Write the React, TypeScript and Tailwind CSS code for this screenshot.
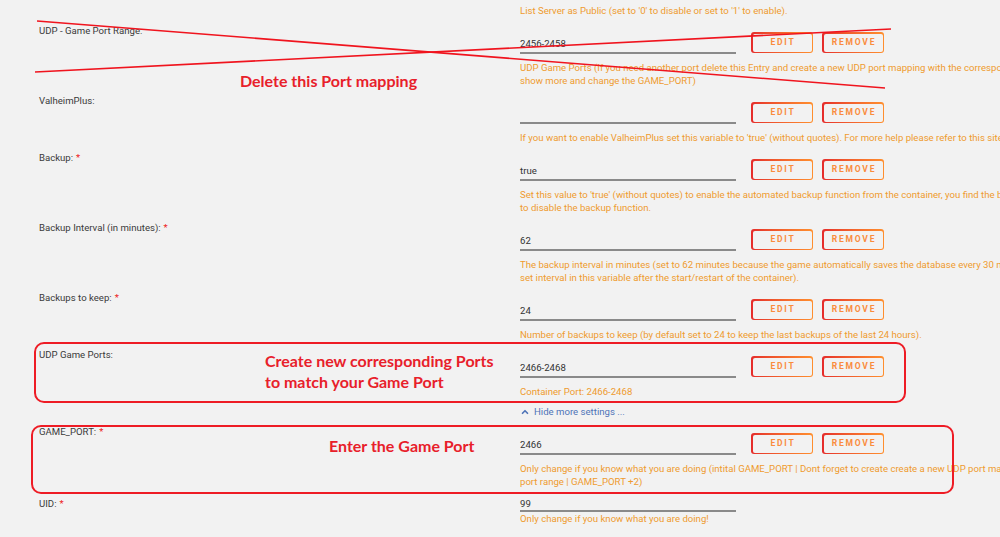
import { ChevronUp } from "lucide-react";

type Setting = {
  label: string;
  required?: boolean;
  value: string;
  help: string[];
};

const settings: Setting[] = [
  {
    label: "UDP - Game Port Range:",
    value: "2456-2458",
    help: [
      "UDP Game Ports (If you need another port delete this Entry and create a new UDP port mapping with the corresponding container port and click on",
      "show more and change the GAME_PORT)",
    ],
  },
  {
    label: "ValheimPlus:",
    value: "",
    help: [
      "If you want to enable ValheimPlus set this variable to 'true' (without quotes). For more help please refer to this site: https://github.com/valheimPlus",
    ],
  },
  {
    label: "Backup:",
    required: true,
    value: "true",
    help: [
      "Set this value to 'true' (without quotes) to enable the automated backup function from the container, you find the backups in your server directory, set it to 'false'",
      "to disable the backup function.",
    ],
  },
  {
    label: "Backup Interval (in minutes):",
    required: true,
    value: "62",
    help: [
      "The backup interval in minutes (set to 62 minutes because the game automatically saves the database every 30 minutes) ATTENTION: The first backup will be made after the",
      "set interval in this variable after the start/restart of the container).",
    ],
  },
  {
    label: "Backups to keep:",
    required: true,
    value: "24",
    help: ["Number of backups to keep (by default set to 24 to keep the last backups of the last 24 hours)."],
  },
  {
    label: "UDP Game Ports:",
    value: "2466-2468",
    help: ["Container Port: 2466-2468"],
  },
];

const gamePort: Setting = {
  label: "GAME_PORT:",
  required: true,
  value: "2466",
  help: [
    "Only change if you know what you are doing (intital GAME_PORT | Dont forget to create create a new UDP port mapping with the corresponding",
    "port range | GAME_PORT +2)",
  ],
};

const OutlineButton = ({ children }: { children: string }) => (
  <div className="rounded-[3px] bg-linear-to-r from-[#e52b2b] to-[#ff8f2e] p-[1.5px]">
    <div className="flex h-[18px] items-center justify-center rounded-[2px] bg-[#f2f2f2] pl-[2px] text-[8.5px] font-bold tracking-[1.8px] text-[#fa8c3c]">
      {children}
    </div>
  </div>
);

const Label = ({ s }: { s: Setting }) => (
  <div className="w-[481px] shrink-0 leading-[13px] text-[#3a3a3a]">
    {s.label}
    {s.required && <span className="ml-[3px] text-[#e22]">*</span>}
  </div>
);

const Row = ({ s }: { s: Setting }) => (
  <div className="flex">
    <Label s={s} />
    <div className="min-w-0 flex-1 pt-[8px]">
      <div className="flex items-end">
        <div className="h-[21px] w-[216px] border-b-2 border-[#8a8a8a] pt-[4px] leading-[13px] text-[#333]">
          {s.value}
        </div>
        <div className="ml-[15px] flex gap-[9px] pb-px">
          <div className="w-[62px]">
            <OutlineButton>EDIT</OutlineButton>
          </div>
          <div className="w-[62px]">
            <OutlineButton>REMOVE</OutlineButton>
          </div>
        </div>
      </div>
      <div className="mt-[7px] text-[#ef9b2f]">
        {s.help.map((line) => (
          <div key={line} className="whitespace-nowrap leading-[13px]">
            {line}
          </div>
        ))}
      </div>
    </div>
  </div>
);

export default function App() {
  return (
    <div className="relative h-[537px] w-[1000px] overflow-hidden bg-[#f2f2f2] font-['Roboto',sans-serif] text-[9.6px]">
      <div className="flex flex-col gap-[7px] pl-[39px] pt-[4px]">
        <div className="flex">
          <div className="w-[481px] shrink-0" />
          <div className="whitespace-nowrap leading-[13px] text-[#ef9b2f]">
            List Server as Public (set to '0' to disable or set to '1' to enable).
          </div>
        </div>
        {settings.map((s) => (
          <Row key={s.label} s={s} />
        ))}
        <div className="flex">
          <div className="w-[481px] shrink-0" />
          <div className="flex items-center gap-[4px] leading-[13px] text-[#4f74b8]">
            <ChevronUp size={10} strokeWidth={4} />
            Hide more settings ...
          </div>
        </div>
        <Row s={gamePort} />
        <div className="flex pt-[2px]">
          <Label s={{ label: "UID:", required: true, value: "99", help: [] }} />
          <div className="pt-[1px]">
            <div className="h-[14px] w-[216px] border-b-2 border-[#8a8a8a] leading-[11px] text-[#333]">99</div>
            <div className="leading-[13px] text-[#ef9b2f]">Only change if you know what you are doing!</div>
          </div>
        </div>
      </div>

      {/* annotations drawn over the form */}
      <svg className="pointer-events-none absolute left-0 top-0" width="1000" height="537">
        <line x1="37" y1="21" x2="885" y2="88" stroke="#f0141e" strokeWidth="1.6" />
        <line x1="35" y1="72" x2="891" y2="29" stroke="#f0141e" strokeWidth="1.6" />
      </svg>
      <div className="pointer-events-none absolute left-[240px] top-[69px] whitespace-nowrap font-['Lato',sans-serif] text-[16px] font-bold text-[#e8202a]">
        Delete this Port mapping
      </div>
      <div className="pointer-events-none absolute left-[34px] top-[342px] h-[61px] w-[872px] rounded-[10px] border-2 border-[#ee1c25]" />
      <div className="pointer-events-none absolute left-[265px] top-[350px] font-['Lato',sans-serif] text-[16px] font-bold leading-[21px] text-[#e8202a]">
        <div>Create new corresponding Ports</div>
        <div>to match your Game Port</div>
      </div>
      <div className="pointer-events-none absolute left-[31px] top-[425px] h-[69px] w-[923px] rounded-[10px] border-2 border-[#ee1c25]" />
      <div className="pointer-events-none absolute left-[329px] top-[434px] whitespace-nowrap font-['Lato',sans-serif] text-[16px] font-bold text-[#e8202a]">
        Enter the Game Port
      </div>
    </div>
  );
}
